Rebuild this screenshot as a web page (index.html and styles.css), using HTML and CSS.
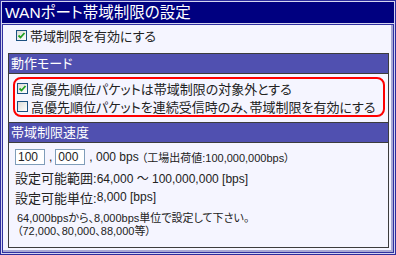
FILE: index.html
```html
<!DOCTYPE html>
<html lang="ja">
<head>
    <meta charset="UTF-8">
    <title>WANポート帯域制限の設定</title>
    <link rel="stylesheet" href="styles.css">
</head>
<body>
    <div class="window">
        <div class="title">WANポート帯域制限の設定</div>
        <div class="panel">
            <label class="check-row">
                <span class="cb checked"><svg viewBox="0 0 9 9"><path d="M1.5 4.5 L3.5 6.5 L7.5 2" /></svg></span>帯域制限を有効にする
            </label>

            <div class="group">
                <div class="group-head">動作モード</div>
                <div class="group-body mode">
                    <div class="highlight">
                        <label class="check-row">
                            <span class="cb checked"><svg viewBox="0 0 9 9"><path d="M1.5 4.5 L3.5 6.5 L7.5 2" /></svg></span>高優先順位パケットは帯域制限の対象外とする
                        </label>
                        <label class="check-row">
                            <span class="cb"></span>高優先順位パケットを連続受信時のみ、帯域制限を有効にする
                        </label>
                    </div>
                </div>

                <div class="group-head">帯域制限速度</div>
                <div class="group-body speed">
                    <div class="line">
                        <input type="text" class="num" value="100"><span class="sep val">,</span><input type="text" class="num" value="000"><span class="sep last val">, 000 bps</span><span class="note">（工場出荷値:100,000,000bps）</span>
                    </div>
                    <div class="line">設定可能範囲:<span class="val">64,000 ～ 100,000,000 [bps]</span></div>
                    <div class="line">設定可能単位:<span class="val">8,000 [bps]</span></div>
                    <div class="small">
                        64,000bpsから、8,000bps単位で設定して下さい。<br>
                        （72,000、80,000、88,000等）
                    </div>
                </div>
            </div>
        </div>
    </div>
</body>
</html>
```

FILE: styles.css
```css
body {
    margin: 0;
    font-family: "Liberation Sans", "Noto Sans CJK JP", sans-serif;
    font-size: 13px;
    font-feature-settings: "palt";
    color: #222;
}
.window {
    width: 396px;
    height: 255px;
    box-sizing: border-box;
    border: 1px solid #2c2c9c;
    padding: 1px;
    background: #d4d4f0;
    display: flex;
    flex-direction: column;
    gap: 1px;
}
.title {
    height: 21px;
    line-height: 21px;
    background-color: #000080;
    color: white;
    font-size: 15.5px;
    padding-left: 3px;
    white-space: nowrap;
}
.panel {
    flex: 1;
    border: 1px solid #3030a0;
    background-color: #f5f5ff;
    box-shadow: inset -2px -2px 0 #a8a8d4;
    padding: 0 4px 0 5px;
}
.check-row {
    display: flex;
    align-items: center;
    height: 20px;
    padding-left: 8px;
    white-space: nowrap;
}
.cb {
    width: 9px;
    height: 9px;
    border: 1px solid #1c5180;
    background: linear-gradient(135deg, #dcdcd7, #ffffff);
    margin-right: 3px;
    flex-shrink: 0;
}
.cb svg {
    display: block;
    width: 9px;
    height: 9px;
}
.cb path {
    fill: none;
    stroke: #21a121;
    stroke-width: 1.8;
}
.group {
    margin-top: 8px;
    border: 1px solid #3c3c3c;
}
.group-head {
    height: 19px;
    line-height: 19px;
    background-color: #5050b0;
    color: white;
    padding-left: 2px;
    border-bottom: 1px solid #3c3c3c;
}
.group-body.mode {
    height: 49px;
    padding: 3px 3px 0 4px;
    box-sizing: border-box;
    border-bottom: 1px solid #3c3c3c;
}
.highlight {
    border: 2px solid #ff0000;
    border-radius: 8px;
    height: 40px;
    box-sizing: border-box;
}
.highlight .check-row {
    height: 18px;
    padding-left: 2px;
}
.group-body.speed {
    padding: 4px 0 0 6px;
    height: 104px;
    box-sizing: border-box;
}
.line {
    height: 20px;
    display: flex;
    align-items: center;
    white-space: nowrap;
}
.val {
    font-size: 12px;
}
.num {
    width: 30px;
    height: 16px;
    box-sizing: border-box;
    border: 1px solid #7f9db9;
    background: white;
    font: inherit;
    font-size: 12px;
    padding: 0 2px;
    color: #222;
}
.sep {
    margin: 0 3px 0 4px;
}
.sep.last {
    margin-right: 0;
}
.note {
    font-size: 11px;
    margin-left: 3px;
}
.small {
    margin-top: 5px;
    padding-left: 2px;
    font-size: 11px;
    line-height: 13px;
    white-space: nowrap;
}
```
